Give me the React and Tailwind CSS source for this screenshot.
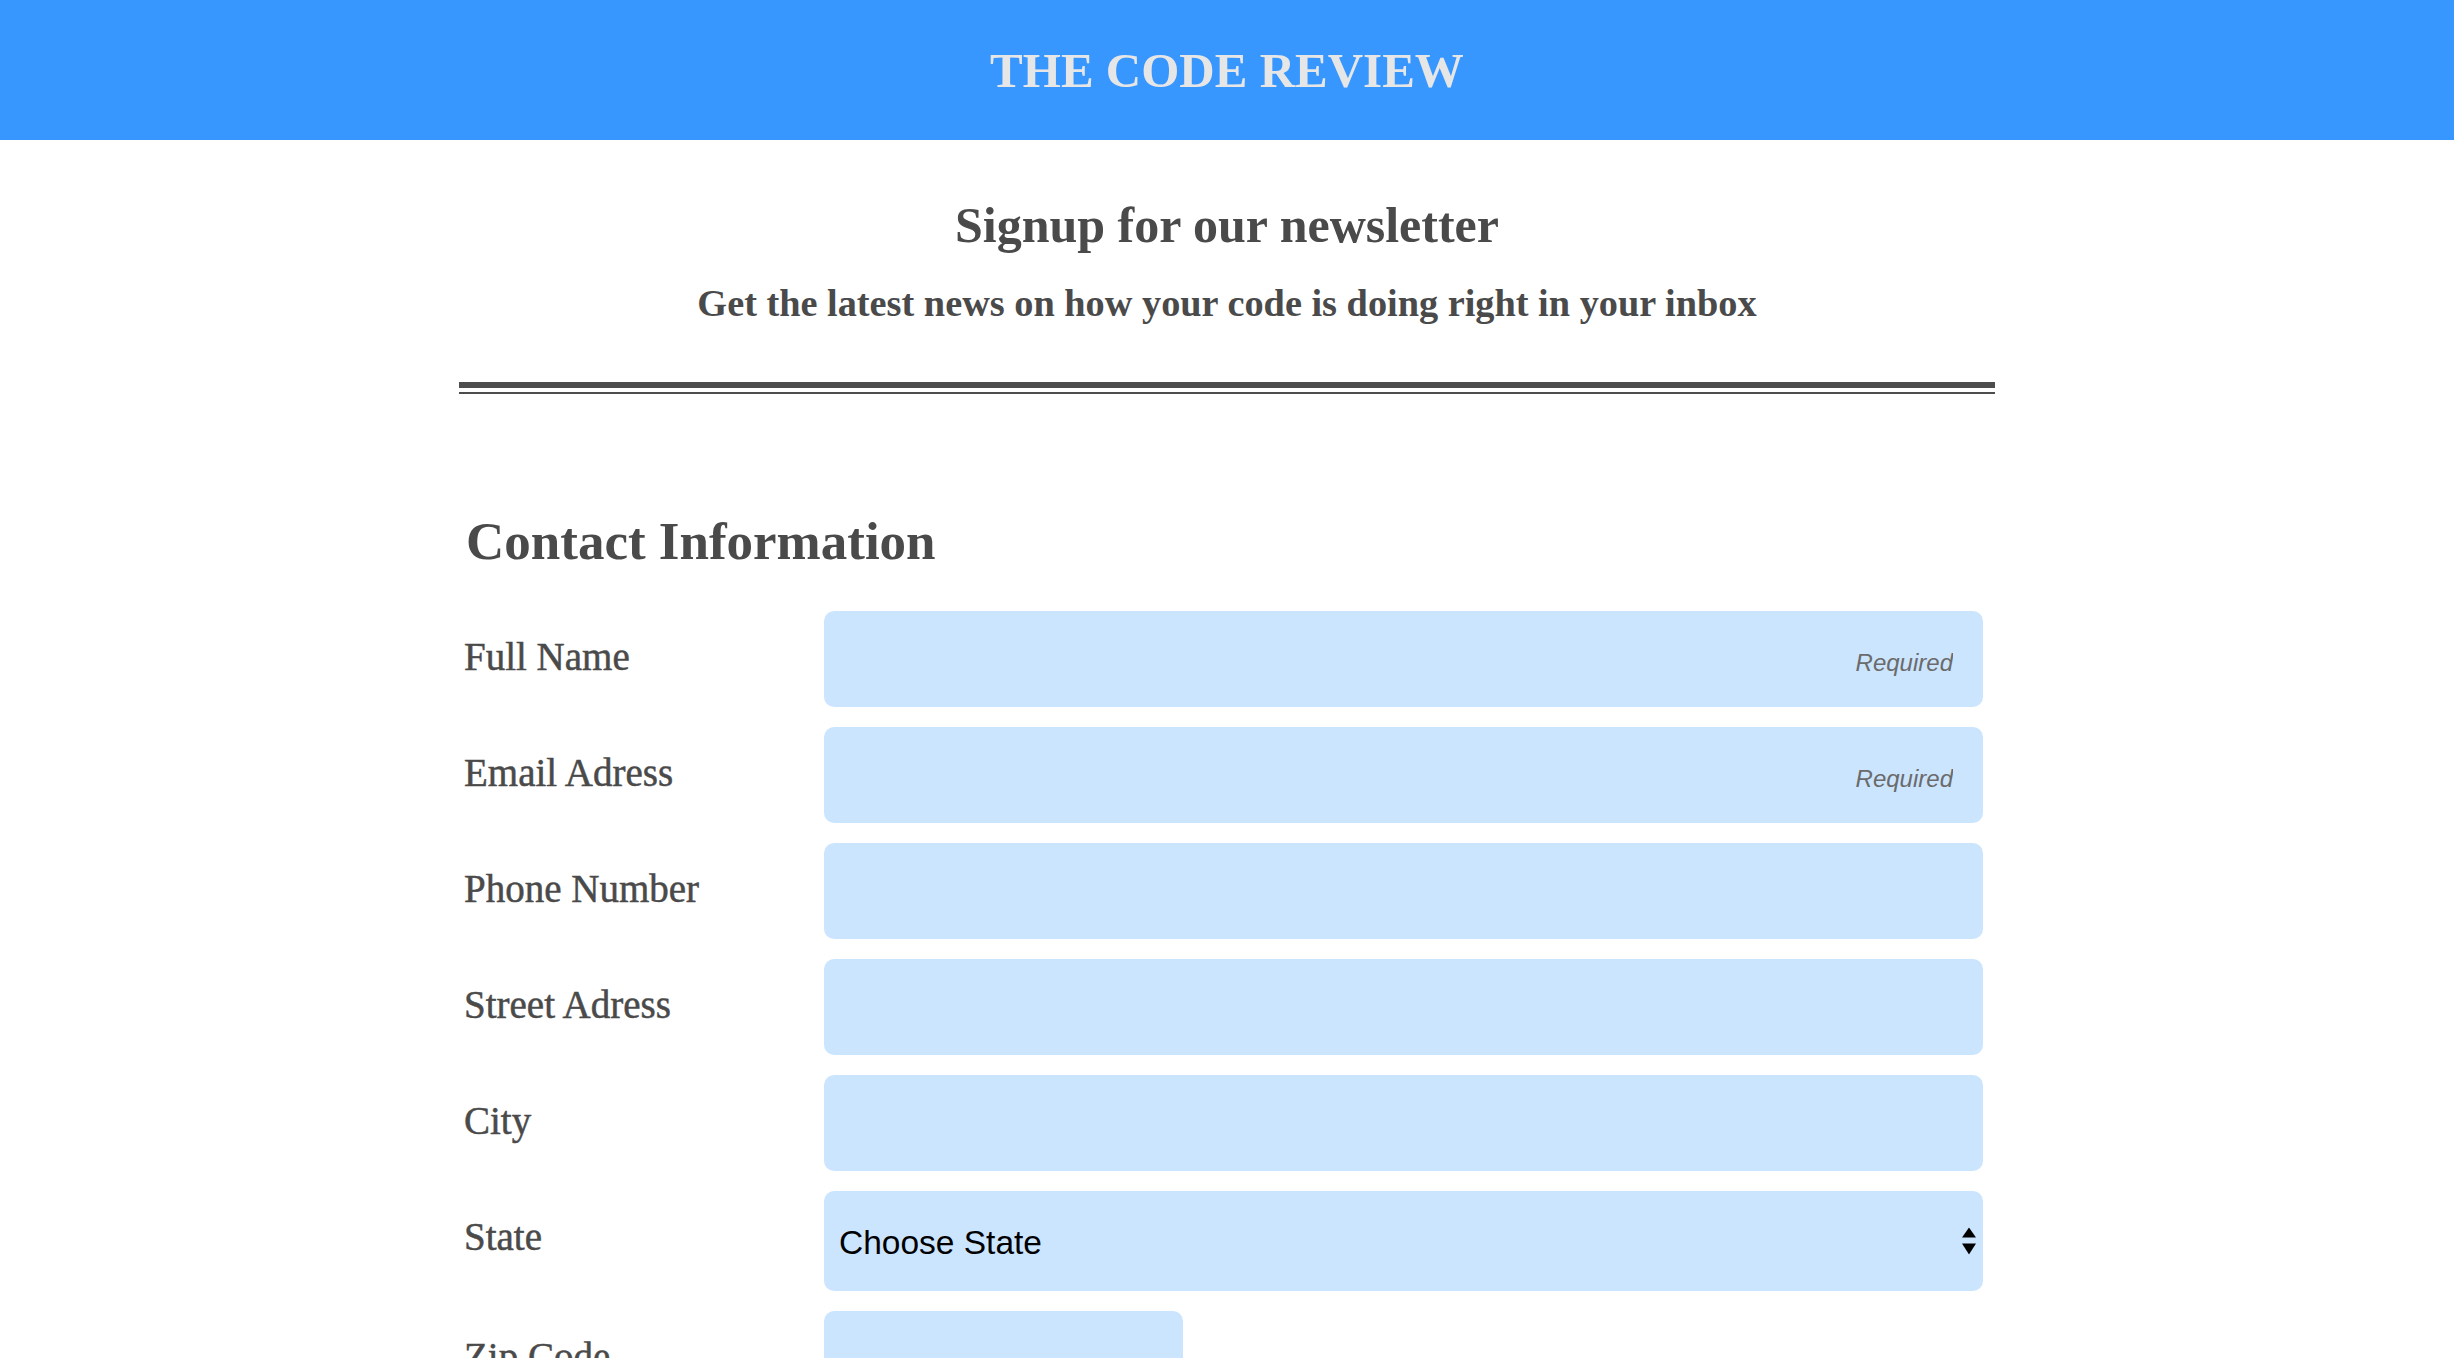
import React from "react";

function Row({ label, children }) {
  return (
    <div className="flex items-start">
      <label className="w-[360px] shrink-0 pt-[26px] text-[39px] leading-none text-[#4a4a4a] [-webkit-text-stroke:0.5px_#4a4a4a]">
        {label}
      </label>
      {children}
    </div>
  );
}

function TextInput({ required }) {
  return (
    <input
      type="text"
      placeholder={required ? "Required" : ""}
      className="h-[96px] min-w-0 flex-1 rounded-[10px] bg-[#cce5ff] px-[30px] pt-2 text-right font-['Liberation_Sans',Arial,sans-serif] text-[24px] text-black outline-none placeholder:italic placeholder:text-[#6b6b6b]"
    />
  );
}

export default function App() {
  return (
    <div className="min-h-screen bg-white font-['Liberation_Serif','Times_New_Roman',serif] text-[#4a4a4a]">
      <header className="flex h-[140px] items-center justify-center bg-[#3797ff]">
        <h1 className="text-[49px] font-bold leading-none text-[#e6e6e6]">THE CODE REVIEW</h1>
      </header>

      <main className="mx-auto w-[1536px]">
        <h2 className="mt-[60px] text-center text-[50px] font-bold leading-none">
          Signup for our newsletter
        </h2>
        <p className="mt-[34px] text-center text-[38.3px] font-bold leading-none">
          Get the latest news on how your code is doing right in your inbox
        </p>

        <div className="mt-[60px] flex flex-col gap-[4px]">
          <div className="h-[6px] bg-[#4d4d4d]" />
          <div className="h-[2px] bg-[#4d4d4d]" />
        </div>

        <form className="pl-[5px] pr-[12px]">
          <h3 className="mt-[121px] pl-[2px] text-[53px] font-bold leading-none">
            Contact Information
          </h3>

          <div className="mt-[43px] flex flex-col gap-[20px]">
            <Row label="Full Name">
              <TextInput required />
            </Row>
            <Row label="Email Adress">
              <TextInput required />
            </Row>
            <Row label="Phone Number">
              <TextInput />
            </Row>
            <Row label="Street Adress">
              <TextInput />
            </Row>
            <Row label="City">
              <TextInput />
            </Row>
            <Row label="State">
              <div className="relative min-w-0 flex-1">
                <select
                  defaultValue=""
                  className="h-[100px] w-full appearance-none rounded-[10px] bg-[#cce5ff] pl-[15px] pt-[3px] font-['Liberation_Sans',Arial,sans-serif] text-[33.5px] text-black outline-none"
                >
                  <option value="">Choose State</option>
                  <option value="AL">Alabama</option>
                  <option value="AK">Alaska</option>
                  <option value="AZ">Arizona</option>
                  <option value="CA">California</option>
                  <option value="NY">New York</option>
                </select>
                <svg
                  className="pointer-events-none absolute right-[7px] top-1/2 -translate-y-1/2"
                  width="14"
                  height="27"
                  viewBox="0 0 14 27"
                >
                  <polygon points="7,0 14,10 0,10" fill="#000" />
                  <polygon points="0,16 14,16 7,27" fill="#000" />
                </svg>
              </div>
            </Row>
            <Row label="Zip Code">
              <input
                type="text"
                className="h-[96px] w-[359px] rounded-[10px] bg-[#cce5ff] px-[20px] font-['Liberation_Sans',Arial,sans-serif] text-[24px] text-black outline-none"
              />
            </Row>
          </div>
          <div className="h-[120px]" />
        </form>
      </main>
    </div>
  );
}
